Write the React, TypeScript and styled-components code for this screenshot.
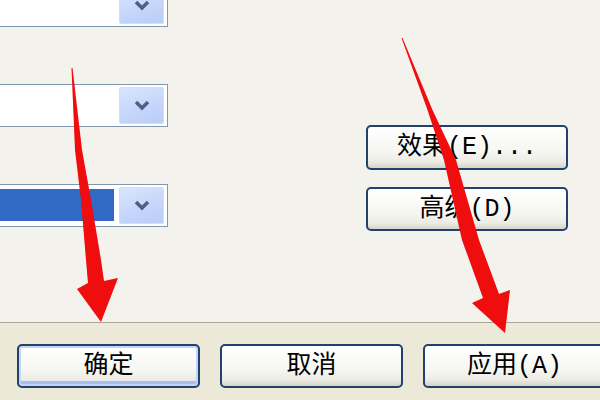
import React from 'react';
import styled, { createGlobalStyle, css } from 'styled-components';

const GlobalStyle = createGlobalStyle`
    html, body {
        margin: 0;
        padding: 0;
        background: #ece9d8;
    }
`;

const Page = styled.div`
    position: relative;
    width: 600px;
    height: 400px;
    overflow: hidden;
    display: flex;
    flex-direction: column;
    background: #ece9d8;
    font-family: 'Liberation Mono', 'Noto Sans CJK SC', monospace;
`;

const TabPanel = styled.div`
    height: 322px;
    flex-shrink: 0;
    display: flex;
    justify-content: space-between;
    background: #f3f2ed;
    border-bottom: 1px solid #aca899;
    box-shadow: 0 1px 0 #ffffff;
`;

const ComboColumn = styled.div`
    display: flex;
    flex-direction: column;
    gap: 57px;
    margin-top: -16px;
    margin-left: -80px;
    width: 248px;
`;

const Combo = styled.div`
    box-sizing: border-box;
    height: 43px;
    display: flex;
    gap: 5px;
    padding: 2px 3px 2px 3px;
    background: #ffffff;
    border: 1px solid #8197ad;
`;

const ComboValue = styled.div<{ $selected?: boolean }>`
    flex: 1;
    margin: 2px 0 3px;
    background: ${(p) => (p.$selected ? '#316ac5' : 'transparent')};
`;

const DropButton = styled.div`
    width: 45px;
    display: flex;
    align-items: center;
    justify-content: center;
    border-radius: 3px;
    background: linear-gradient(160deg, #dbe6fe 0%, #c6d6fb 55%, #b9cdf8 100%);
    box-shadow: inset 0 0 0 1px #d0ddfb;
`;

const ButtonColumn = styled.div`
    display: flex;
    flex-direction: column;
    gap: 17px;
    margin-top: 125px;
    margin-right: 32px;
`;

const XpButton = styled.div<{ $default?: boolean; $w: number; $h: number }>`
    box-sizing: border-box;
    flex-shrink: 0;
    width: ${(p) => p.$w}px;
    height: ${(p) => p.$h}px;
    display: flex;
    align-items: center;
    justify-content: center;
    border: 2px solid #22416b;
    border-radius: 5px;
    background: linear-gradient(180deg, #ffffff 0%, #f6f6f2 60%, #ecebe4 85%, #d8d3c8 100%);
    color: #000000;
    font-size: 25px;
    line-height: 1;
    ${(p) =>
        p.$default &&
        css`
            box-shadow: inset 0 0 0 2px #c4d5f8, inset 0 -3px 0 2px #a6bff0;
        `}
`;

const ButtonBar = styled.div`
    flex: 1;
    display: flex;
    gap: 20px;
    padding: 21px 0 0 17px;
    background: #ece9d8;
`;

const ArrowLayer = styled.svg`
    position: absolute;
    left: 0;
    top: 0;
    pointer-events: none;
`;

const Chevron = () => (
    <svg width="18" height="11" viewBox="0 0 18 11">
        <polyline points="3,2 9,8 15,2" fill="none" stroke="#4d6185" strokeWidth="3.5" />
    </svg>
);

const leftArrow =
    '71.5,68 75,150 81,200 86,260 88,283 77,289 101,322 118,278 104,281 101,260 91,200 82,150 72.5,68';
const rightArrow =
    '401.5,38 427.5,110 444,160 462,240 483,298 472,303 505,333 510,290 499,294 479,240 456,160 432.5,110 402.5,38';

const App: React.FunctionComponent = () => {
    return (
        <Page>
            <GlobalStyle />
            <TabPanel>
                <ComboColumn>
                    <Combo>
                        <ComboValue />
                        <DropButton>
                            <Chevron />
                        </DropButton>
                    </Combo>
                    <Combo>
                        <ComboValue />
                        <DropButton>
                            <Chevron />
                        </DropButton>
                    </Combo>
                    <Combo>
                        <ComboValue $selected />
                        <DropButton>
                            <Chevron />
                        </DropButton>
                    </Combo>
                </ComboColumn>
                <ButtonColumn>
                    <XpButton $w={202} $h={45}>效果(E)...</XpButton>
                    <XpButton $w={202} $h={44}>高级(D)</XpButton>
                </ButtonColumn>
            </TabPanel>
            <ButtonBar>
                <XpButton $default $w={183} $h={44}>确定</XpButton>
                <XpButton $w={183} $h={44}>取消</XpButton>
                <XpButton $w={183} $h={44}>应用(A)</XpButton>
            </ButtonBar>
            <ArrowLayer width="600" height="400" viewBox="0 0 600 400">
                <defs>
                    <filter id="soft" x="-10%" y="-10%" width="120%" height="120%">
                        <feGaussianBlur stdDeviation="0.6" />
                    </filter>
                </defs>
                <polygon points={leftArrow} fill="#f0080e" filter="url(#soft)" />
                <polygon points={rightArrow} fill="#f0080e" filter="url(#soft)" />
            </ArrowLayer>
        </Page>
    );
};

export default App;
